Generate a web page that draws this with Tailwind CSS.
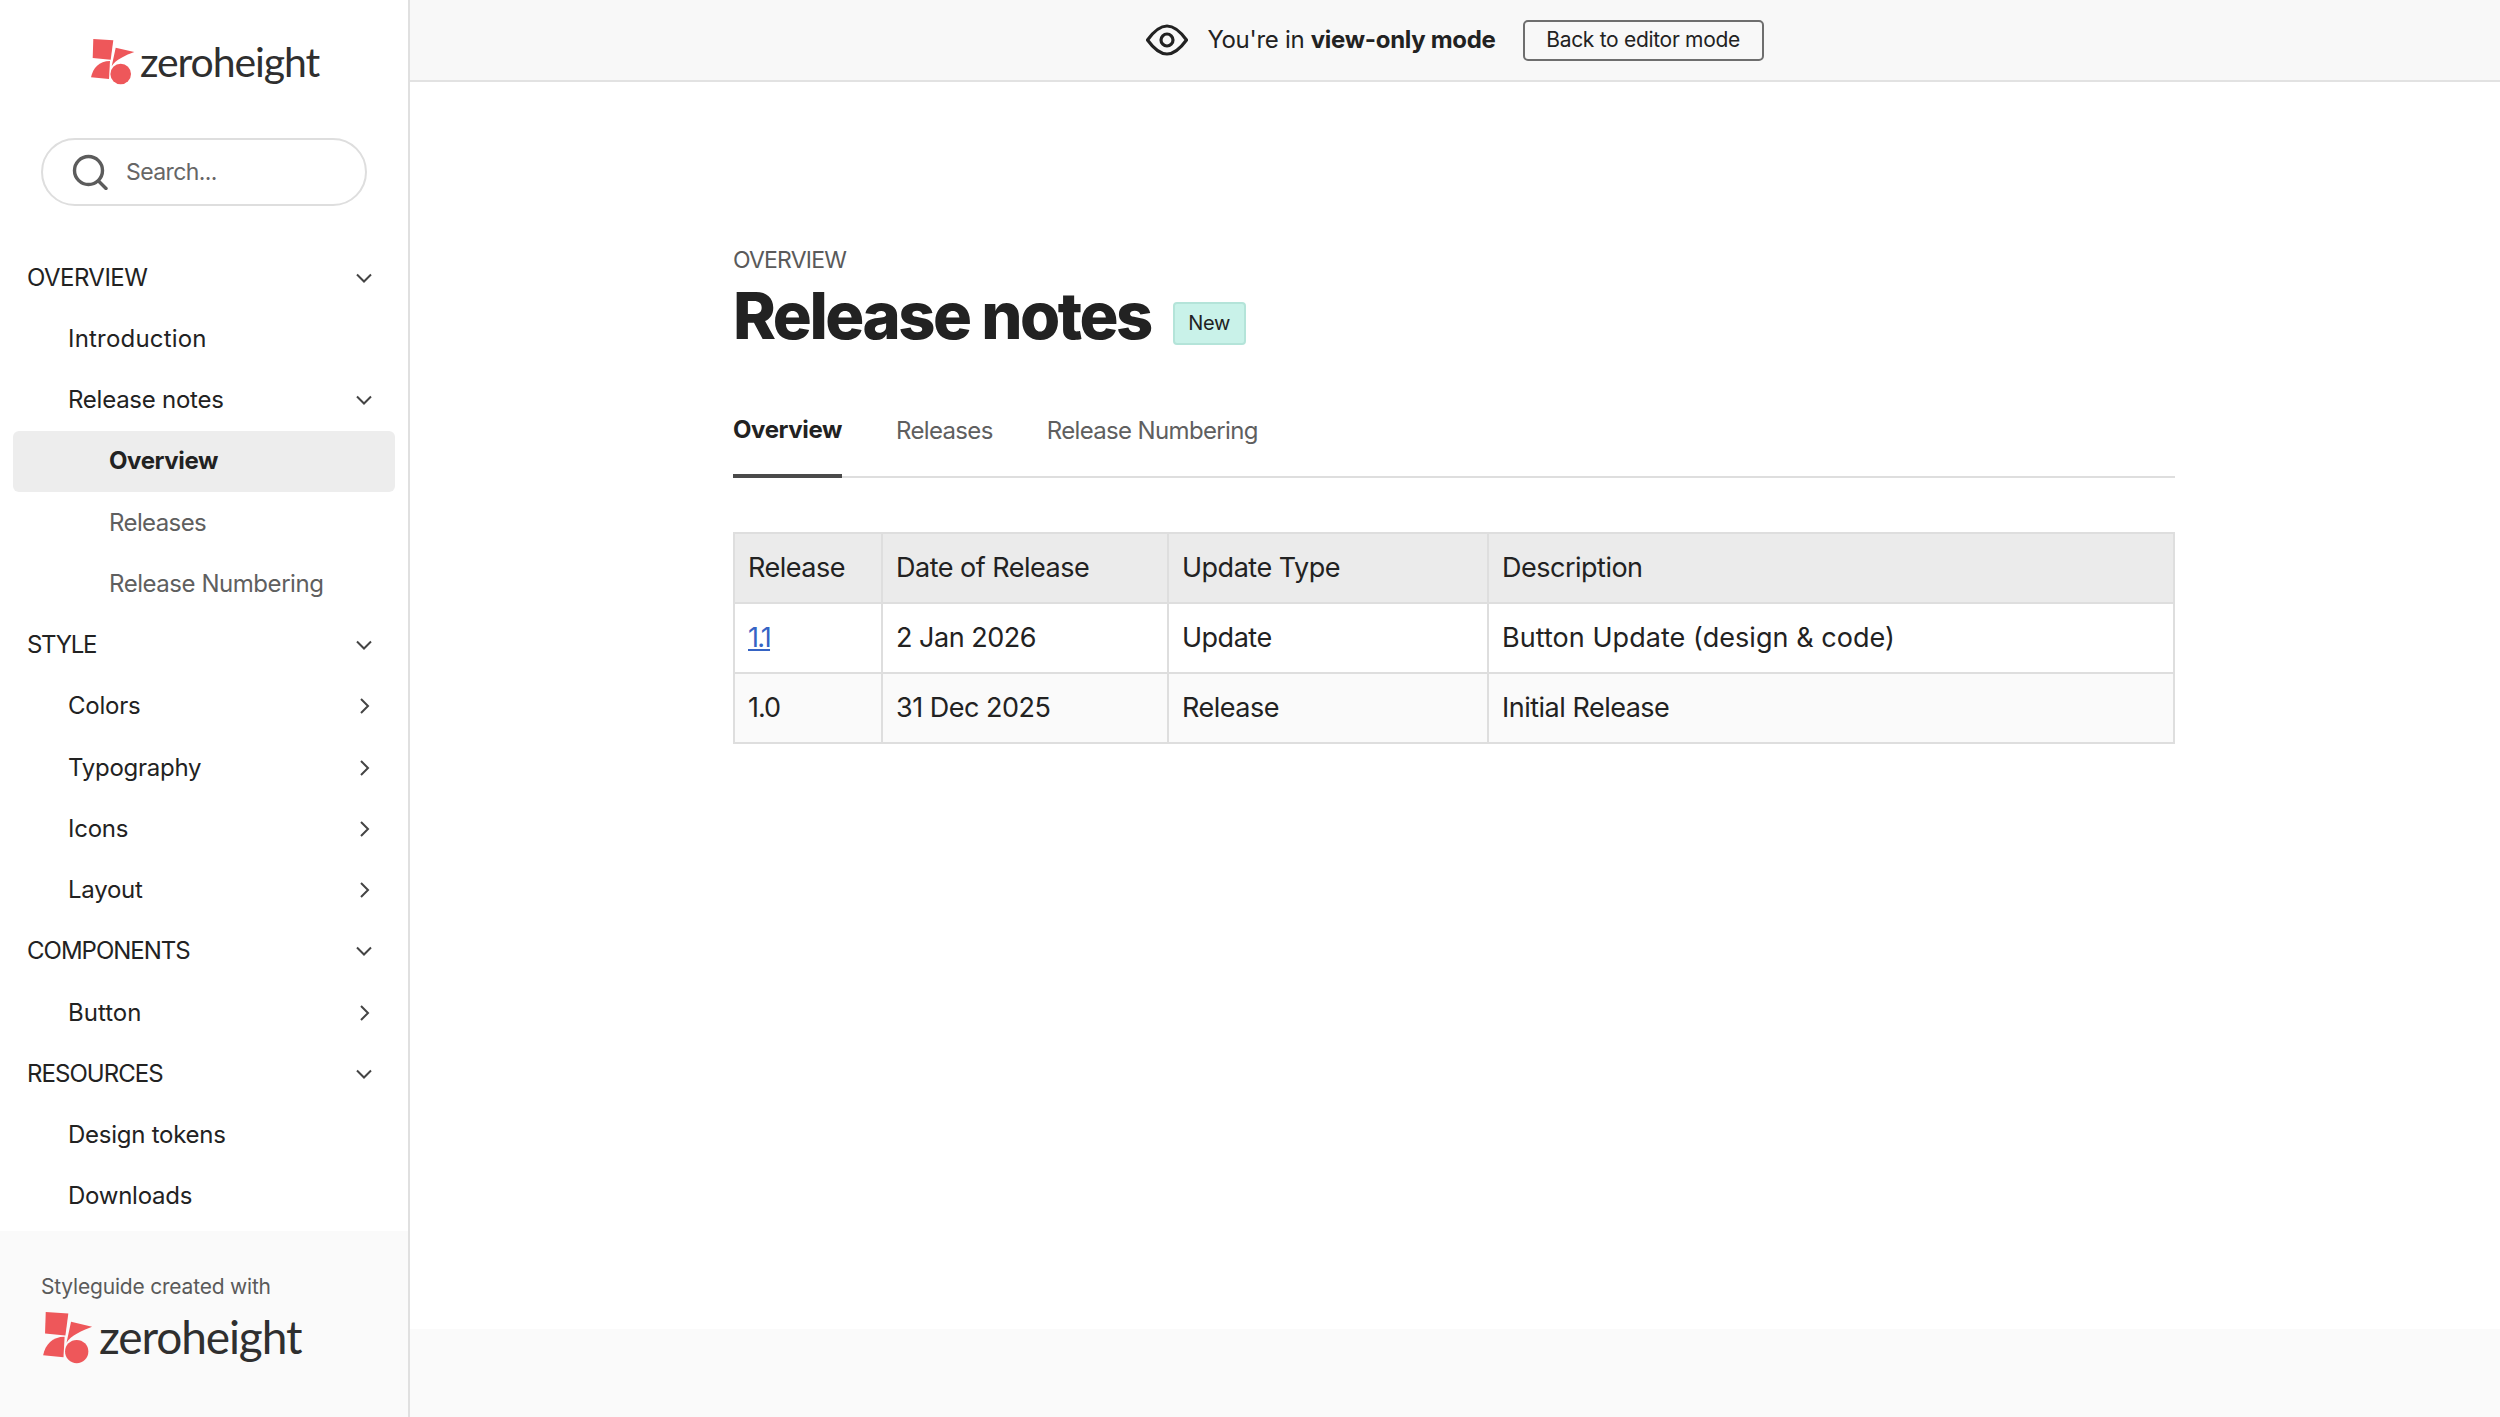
<!DOCTYPE html>
<html>
<head>
<meta charset="utf-8">
<script src="https://cdn.jsdelivr.net/npm/@tailwindcss/browser@4"></script>
</head>
<body class="m-0 bg-white">
<div class="flex w-[2500px] h-[1417px] overflow-hidden font-['Inter',sans-serif] text-[#222222]">
  <aside class="flex flex-col w-[410px] h-full border-r-2 border-[#e0e0e0] shrink-0">
    <div class="flex-1 px-[13px]">
      <div class="flex items-center justify-center h-[120px] pt-[4px] pl-[2px] gap-[5px]">
        <svg class="w-[44px] h-[46px]" viewBox="92 42 44 46"><g fill="#ee575a"><path d="M94.3 42 114.3 43.3 111.7 62.7 93.7 61Z"/><path d="M116.7 50.7 135.3 55C127 58 116 63 112.7 69.3Z"/><path d="M92 80.3 110 82 111 64C100 64 94 71 92 80.3Z"/><circle cx="121.7" cy="77" r="10.3"/></g></svg>
        <span class="text-[41px] leading-none tracking-[-1.1px] text-[#2f2f2f] font-['Lato',sans-serif] pb-[1px]">zeroheight</span>
      </div>
      <div class="flex items-center h-[68px] ml-[28px] mr-[28px] mt-[18px] rounded-full border-2 border-[#dedede] pl-[29px] gap-[18px]">
        <svg class="w-[36px] h-[36px]" viewBox="0 0 36 36" fill="none" stroke="#5c5c5c" stroke-width="3.4"><circle cx="16.5" cy="16.5" r="14"/><path d="M26.5 27 34 34.5" stroke-linecap="round"/></svg>
        <span class="text-[23px] tracking-[-0.6px] text-[#666666]">Search...</span>
      </div>
      <nav class="mt-[41px] text-[24px] leading-none tracking-[-0.25px]">
        <div class="flex items-center justify-between h-[61.25px] pl-[14px] pr-[22px] uppercase tracking-[-0.55px]">Overview <svg class="w-[18px] h-[12px]" viewBox="0 0 18 12" fill="none" stroke="#444" stroke-width="2"><path d="M2 2.5 9 9.5 16 2.5"/></svg></div>
        <div class="flex items-center h-[61.25px] pl-[55px] tracking-[0.2px]">Introduction</div>
        <div class="flex items-center justify-between h-[61.25px] pl-[55px] pr-[22px]">Release notes <svg class="w-[18px] h-[12px]" viewBox="0 0 18 12" fill="none" stroke="#444" stroke-width="2"><path d="M2 2.5 9 9.5 16 2.5"/></svg></div>
        <div class="flex items-center h-[61.25px] pl-[96px] bg-[#ededed] rounded-[6px] font-bold tracking-[-0.4px]">Overview</div>
        <div class="flex items-center h-[61.25px] pl-[96px] text-[#5f5f5f] tracking-[-0.6px]">Releases</div>
        <div class="flex items-center h-[61.25px] pl-[96px] text-[#5f5f5f] tracking-[-0.45px]">Release Numbering</div>
        <div class="flex items-center justify-between h-[61.25px] pl-[14px] pr-[22px] uppercase tracking-[-1.3px]">Style <svg class="w-[18px] h-[12px]" viewBox="0 0 18 12" fill="none" stroke="#444" stroke-width="2"><path d="M2 2.5 9 9.5 16 2.5"/></svg></div>
        <div class="flex items-center justify-between h-[61.25px] pl-[55px] pr-[22px]">Colors <svg class="w-[18px] h-[18px]" viewBox="0 0 18 18" fill="none" stroke="#444" stroke-width="2"><path d="M6 2 13 9 6 16"/></svg></div>
        <div class="flex items-center justify-between h-[61.25px] pl-[55px] pr-[22px]">Typography <svg class="w-[18px] h-[18px]" viewBox="0 0 18 18" fill="none" stroke="#444" stroke-width="2"><path d="M6 2 13 9 6 16"/></svg></div>
        <div class="flex items-center justify-between h-[61.25px] pl-[55px] pr-[22px]">Icons <svg class="w-[18px] h-[18px]" viewBox="0 0 18 18" fill="none" stroke="#444" stroke-width="2"><path d="M6 2 13 9 6 16"/></svg></div>
        <div class="flex items-center justify-between h-[61.25px] pl-[55px] pr-[22px]">Layout <svg class="w-[18px] h-[18px]" viewBox="0 0 18 18" fill="none" stroke="#444" stroke-width="2"><path d="M6 2 13 9 6 16"/></svg></div>
        <div class="flex items-center justify-between h-[61.25px] pl-[14px] pr-[22px] uppercase tracking-[-1px]">Components <svg class="w-[18px] h-[12px]" viewBox="0 0 18 12" fill="none" stroke="#444" stroke-width="2"><path d="M2 2.5 9 9.5 16 2.5"/></svg></div>
        <div class="flex items-center justify-between h-[61.25px] pl-[55px] pr-[22px] tracking-[0px]">Button <svg class="w-[18px] h-[18px]" viewBox="0 0 18 18" fill="none" stroke="#444" stroke-width="2"><path d="M6 2 13 9 6 16"/></svg></div>
        <div class="flex items-center justify-between h-[61.25px] pl-[14px] pr-[22px] uppercase tracking-[-0.95px]">Resources <svg class="w-[18px] h-[12px]" viewBox="0 0 18 12" fill="none" stroke="#444" stroke-width="2"><path d="M2 2.5 9 9.5 16 2.5"/></svg></div>
        <div class="flex items-center h-[61.25px] pl-[55px]">Design tokens</div>
        <div class="flex items-center h-[61.25px] pl-[55px]">Downloads</div>
      </nav>
    </div>
    <div class="h-[186px] bg-[#fafafa] pl-[41px] pt-[42px]">
      <div class="text-[21px] leading-[28px] tracking-[-0.2px] text-[#5a5a5a]">Styleguide created with</div>
      <div class="flex items-center gap-[6px] ml-[2px] mt-[11px]">
        <svg class="w-[50px] h-[52px]" viewBox="92 42 44 46"><g fill="#ee575a"><path d="M94.3 42 114.3 43.3 111.7 62.7 93.7 61Z"/><path d="M116.7 50.7 135.3 55C127 58 116 63 112.7 69.3Z"/><path d="M92 80.3 110 82 111 64C100 64 94 71 92 80.3Z"/><circle cx="121.7" cy="77" r="10.3"/></g></svg>
        <span class="text-[46px] leading-none tracking-[-1.1px] text-[#2f2f2f] font-['Lato',sans-serif] pb-[3px]">zeroheight</span>
      </div>
    </div>
  </aside>
  <main class="flex flex-col flex-1 h-full">
    <header class="flex items-center justify-center h-[82px] bg-[#f8f8f8] border-b-2 border-[#e2e2e2] shrink-0">
      <svg class="w-[42px] h-[32px]" viewBox="0 0 42 32" fill="none" stroke="#222" stroke-width="3.2"><path d="M1.5 16C8 7 14 2 21 2S34 7 40.5 16C34 25 28 30 21 30S8 25 1.5 16Z" stroke-linejoin="round"/><circle cx="21" cy="16" r="6"/></svg>
      <span class="ml-[19px] text-[24px] tracking-[-0.3px]">You're in <b class="font-bold">view-only mode</b></span>
      <span class="flex items-center justify-center ml-[27px] w-[241px] h-[41px] rounded-[5px] border-2 border-[#6e6e6e] text-[21px] tracking-[-0.3px]">Back to editor mode</span>
    </header>
    <div class="flex-1 pl-[323px] pr-[325px] pt-[163px]">
      <div class="text-[23px] leading-[30px] text-[#5a5a5a] tracking-[-0.8px]">OVERVIEW</div>
      <div class="flex items-center mt-[5px] h-[78px]">
        <h1 class="relative top-[-4px] text-[65px] leading-none font-extrabold tracking-[-2.5px] text-[#222222]">Release notes</h1>
        <span class="flex items-center justify-center ml-[22px] mt-[8px] w-[73px] h-[43px] rounded-[4px] bg-[#c9f2e9] border-2 border-[#b4e4d9] text-[20px] tracking-[-0.3px]">New</span>
      </div>
      <div class="flex h-[96px] mt-[24px] border-b-2 border-[#dedede] text-[24px] tracking-[-0.65px]">
        <div class="flex items-center h-[96px] pt-[4px] border-b-[4px] border-[#4a4a4a] font-bold w-[109px] tracking-[-0.4px]">Overview</div>
        <div class="flex items-center h-[96px] pt-[2px] ml-[54px] text-[#5f5f5f]">Releases</div>
        <div class="flex items-center h-[96px] pt-[2px] ml-[54px] text-[#5f5f5f]">Release Numbering</div>
      </div>
      <table class="mt-[54px] w-[1442px] table-fixed border-collapse text-[27px] tracking-[-0.5px]">
        <colgroup><col class="w-[148px]"><col class="w-[286px]"><col class="w-[320px]"><col></colgroup>
        <thead class="bg-[#ebebeb]">
          <tr class="h-[70px]">
            <th class="border-2 border-[#dedede] px-[13px] font-normal text-left">Release</th>
            <th class="border-2 border-[#dedede] px-[13px] font-normal text-left">Date of Release</th>
            <th class="border-2 border-[#dedede] px-[13px] font-normal text-left">Update Type</th>
            <th class="border-2 border-[#dedede] px-[13px] font-normal text-left">Description</th>
          </tr>
        </thead>
        <tbody>
          <tr class="h-[70px]">
            <td class="border-2 border-[#dedede] px-[13px]"><a class="text-[#3563c4] underline tracking-[-1.8px]">1.1</a></td>
            <td class="border-2 border-[#dedede] px-[13px]">2 Jan 2026</td>
            <td class="border-2 border-[#dedede] px-[13px]">Update</td>
            <td class="border-2 border-[#dedede] px-[13px] tracking-[0.05px]">Button Update (design &amp; code)</td>
          </tr>
          <tr class="h-[70px] bg-[#fafafa]">
            <td class="border-2 border-[#dedede] px-[13px] tracking-[-1px]">1.0</td>
            <td class="border-2 border-[#dedede] px-[13px]">31 Dec 2025</td>
            <td class="border-2 border-[#dedede] px-[13px]">Release</td>
            <td class="border-2 border-[#dedede] px-[13px]">Initial Release</td>
          </tr>
        </tbody>
      </table>
    </div>
    <div class="h-[88px] bg-[#fafafa] shrink-0"></div>
  </main>
</div>
</body>
</html>
